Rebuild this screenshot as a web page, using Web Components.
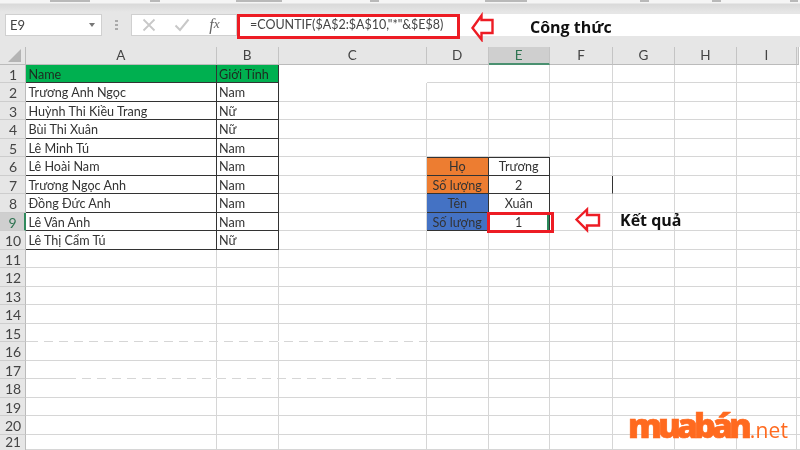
<!DOCTYPE html>
<html lang="vi">
<head>
<meta charset="utf-8">
<title>COUNTIF</title>
<style>
  html, body { margin: 0; padding: 0; background: #fff; }
  body { width: 800px; height: 450px; overflow: hidden; position: relative; font-family: Lato, "Noto Sans", sans-serif; filter: blur(.35px); }
</style>
</head>
<body>
<xl-ribbon></xl-ribbon>
<xl-formula-bar cell="E9">=COUNTIF($A$2:$A$10,"*"&amp;$E$8)</xl-formula-bar>
<xl-sheet></xl-sheet>

<red-box style="left:237px;top:14px;width:223px;height:25px"></red-box>
<red-box style="left:487px;top:212px;width:67px;height:21px"></red-box>
<red-arrow style="left:470px;top:12px" d="M2.5 16L11.5 3.5V8H22.5V21H11.5V27.5Z"></red-arrow>
<red-arrow style="left:574px;top:206px" d="M2.5 13.5L13 3.5V9H25V19.5H13V24Z"></red-arrow>
<note-label style="left:530px;top:17px">Công thức</note-label>
<note-label style="left:620px;top:210px">Kết quả</note-label>
<scan-dash style="left:38px;top:341px;width:392px"></scan-dash>
<scan-dash style="left:76px;top:378px;width:320px"></scan-dash>
<brand-logo></brand-logo>

<script>
class XlRibbon extends HTMLElement{
  constructor(){
    super();
    // the ribbon captions are cut away in the shot, only their feet show
    const feet = [[50,40],[150,10],[236,46],[370,9],[485,42],[640,9],[712,9],[790,8]];
    this.attachShadow({mode:'open'}).innerHTML = `
      <style>
        :host{display:block;height:13px;box-sizing:border-box;position:relative;background:linear-gradient(#f5f5f5 0 3px,#d9d9d9 4px,#e6e6e6 12px);}
        i{position:absolute;top:0;height:2px;background:#b9b9b9;}
      </style>
      ${feet.map(f => `<i style="left:${f[0]}px;width:${f[1]}px"></i>`).join('')}
    `;
  }
}

class XlFormulaBar extends HTMLElement{
  constructor(){
    super();
    const cell = this.getAttribute('cell') || '';
    this.attachShadow({mode:'open'}).innerHTML = `
      <style>
        :host{display:flex;height:34px;background:#e6e6e6;box-sizing:border-box;padding:1px 0 11px 5px;align-items:stretch;}
        .name{width:97px;background:#fff;border:1px solid #d0d0d0;display:flex;align-items:center;justify-content:space-between;padding:0 6px 0 4px;box-sizing:border-box;font-size:13px;color:#444;}
        .caret{width:0;height:0;border:3.5px solid transparent;border-top:4px solid #777;border-bottom:0;}
        .grip{width:29px;display:flex;flex-direction:column;align-items:center;justify-content:center;gap:2px;}
        .grip i{width:3px;height:2px;background:#aaa;}
        .btns{width:106px;background:#fff;border:1px solid #d0d0d0;box-sizing:border-box;display:flex;align-items:center;padding-right:5px;}
        .btns span{flex:1;display:flex;justify-content:center;}
        .fx{font:italic 16px "Liberation Serif",serif;color:#666;}
        .input{flex:1;background:#fff;padding-left:13px;font-size:12.5px;line-height:22px;color:#444;white-space:nowrap;}
      </style>
      <div class="name"><span>${cell}</span><i class="caret"></i></div>
      <div class="grip"><i></i><i></i><i></i></div>
      <div class="btns">
        <span><svg width="14" height="14" viewBox="0 0 14 14"><path d="M1.5 1.5L12.5 12.5M12.5 1.5L1.5 12.5" stroke="#c8c8c8" stroke-width="1.8" fill="none"/></svg></span>
        <span><svg width="16" height="14" viewBox="0 0 16 14"><path d="M1.5 7.5L6 12L14.5 1.5" stroke="#c8c8c8" stroke-width="2" fill="none"/></svg></span>
        <span class="fx">f<small>x</small></span>
      </div>
      <div class="input"><slot></slot></div>
    `;
  }
}

const COLS = ['A','B','C','D','E','F','G','H','I',''];
const TABLE = [
  ['Name','Giới Tính'],['Trương Anh Ngọc','Nam'],['Huỳnh Thi Kiều Trang','Nữ'],['Bùi Thi Xuân','Nữ'],
  ['Lê Minh Tú','Nam'],['Lê Hoài Nam','Nam'],['Trương Ngọc Anh','Nam'],['Đồng Đức Anh','Nam'],
  ['Lê Vân Anh','Nam'],['Lê Thị Cẩm Tú','Nữ']
];
const SIDE = {6:['Họ','Trương','or'],7:['Số lượng','2','or'],8:['Tên','Xuân','bl'],9:['Số lượng','1','bl']};

class XlSheet extends HTMLElement{
  constructor(){
    super();
    this.attachShadow({mode:'open'});
  }
  connectedCallback(){
    let html = '<div class="hd corner"><svg width="14" height="14" viewBox="0 0 14 14"><path d="M13 1V14H0Z" fill="#b4b4b4"/></svg></div>';
    COLS.forEach(c => { html += `<div class="hd col${c==='E'?' on':''}">${c}</div>`; });
    for(let r = 1; r <= 21; r++){
      html += `<div class="hd row${r===9?' on':''}${r===21?' last':''}">${r}</div>`;
      COLS.forEach(c => { html += this.cell(c, r); });
    }
    this.shadowRoot.innerHTML = `
      <style>
        :host{display:block;height:403px;overflow:hidden;background:#fff;color:#333;font-size:12.6px;}
        .grid{display:grid;grid-template-columns:26px 190.5px 62px 148.5px 61.5px 61.5px 63px 62px 62px 60px 2px;grid-template-rows:17.5px repeat(20,18.5px) 15.5px;}
        .grid>div{box-sizing:border-box;white-space:nowrap;line-height:20px;position:relative;}
        .hd{background:#e6e6e6;color:#444;text-align:center;}
        .corner{display:flex;justify-content:flex-end;align-items:center;padding-right:3px;border-right:1px solid #bbb;border-bottom:1px solid #bbb;}
        .col{border-right:1px solid #c4c4c4;border-bottom:1px solid #bbb;font-size:13.5px;line-height:17px !important;}
        .col.on{background:#cfcfcf;color:#2f7452;border-bottom:2px solid #4a9070;}
        .row{border-right:1px solid #bbb;border-bottom:1px solid #cdcdcd;padding-left:1px;font-size:14px;}
        .row.on{background:#cfcfcf;color:#2f7452;border-right:2px solid #2f8a5c;}
        .grid>.row.last{font-size:13.5px;line-height:15px;border-bottom:0;}
        .c{border-right:1px solid #d6d6d6;border-bottom:1px solid #d6d6d6;padding-left:2.5px;}
        .nob{border-bottom-color:transparent;}
        .nor{border-right-color:transparent;}
        .t{border-right:1px solid #333;border-bottom:1px solid #333;}
        .top{box-shadow:inset 0 1px 0 #333;}
        .mid{text-align:center;padding-left:0;}
        .gr{background:#00b050;color:#1d2a20;}
        .or{background:#ed7d31;}
        .bl{background:#4472c4;}
        .ink{border-right:1px solid #333;}
        .sel{box-shadow:inset -2px 0 0 #2a8a5a;}
      </style>
      <div class="grid">${html}</div>`;
  }
  cell(c, r){
    if((c==='A'||c==='B') && r<=10){
      const v = TABLE[r-1][c==='A'?0:1];
      return `<div class="c t${r===1?' gr':''}">${v}</div>`;
    }
    if((c==='D'||c==='E') && SIDE[r]){
      const s = SIDE[r];
      const extra = r===6 ? ' top' : (r===9 && c==='E' ? ' sel' : '');
      return c==='D' ? `<div class="c t mid ${s[2]}${extra}">${s[0]}</div>` : `<div class="c t mid${extra}">${s[1]}</div>`;
    }
    let k = 'c';
    if(c==='C' && r===1) k += ' nob nor';
    if(c==='F' && r===7) k += ' ink';
    return `<div class="${k}"></div>`;
  }
}

// annotations drawn over the sheet
class RedBox extends HTMLElement{
  constructor(){
    super();
    this.attachShadow({mode:'open'}).innerHTML = `<style>:host{position:absolute;box-sizing:border-box;border:3px solid #ed1c24;}</style>`;
  }
}

class RedArrow extends HTMLElement{
  constructor(){
    super();
    this.attachShadow({mode:'open'}).innerHTML = `
      <style>:host{position:absolute;display:block;width:28px;height:30px;}svg{display:block;}</style>
      <svg width="28" height="30" viewBox="0 0 28 30"><path d="${this.getAttribute('d')}" fill="#fff" stroke="#ed1c24" stroke-width="2.4"/></svg>`;
  }
}

class NoteLabel extends HTMLElement{
  constructor(){
    super();
    this.attachShadow({mode:'open'}).innerHTML = `
      <style>:host{position:absolute;font:700 16px/20px "Open Sans",sans-serif;color:#111;white-space:nowrap;}</style><slot></slot>`;
  }
}

class ScanDash extends HTMLElement{
  constructor(){
    super();
    this.attachShadow({mode:'open'}).innerHTML = `
      <style>:host{position:absolute;height:1px;background:repeating-linear-gradient(90deg,#fff 0 6px,transparent 6px 15px);}</style>`;
  }
}

class BrandLogo extends HTMLElement{
  constructor(){
    super();
    this.attachShadow({mode:'open'}).innerHTML = `
      <style>
        :host{position:absolute;left:628px;top:405px;color:#ff6a1f;white-space:nowrap;line-height:40px;font-family:"Open Sans",sans-serif;}
        b{font-weight:800;font-size:34px;letter-spacing:-4px;-webkit-text-stroke:.7px #ff6a1f;}
        span{font-weight:400;font-size:21px;margin-left:2px;letter-spacing:.2px;}
      </style>
      <b>muabán</b><span>.net</span>`;
  }
}

customElements.define('xl-ribbon', XlRibbon);
customElements.define('xl-formula-bar', XlFormulaBar);
customElements.define('xl-sheet', XlSheet);
customElements.define('red-box', RedBox);
customElements.define('red-arrow', RedArrow);
customElements.define('note-label', NoteLabel);
customElements.define('scan-dash', ScanDash);
customElements.define('brand-logo', BrandLogo);
</script>
</body>
</html>
